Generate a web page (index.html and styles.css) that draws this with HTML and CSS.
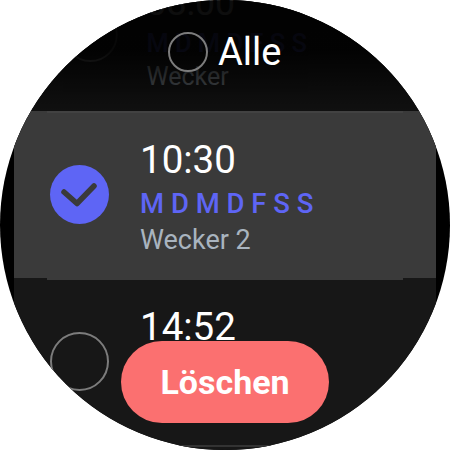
FILE: index.html
```html
<!DOCTYPE html>
<html lang="de">
<head>
<meta charset="utf-8">
<title>Wecker</title>
<link rel="stylesheet" href="styles.css">
</head>
<body>
<main class="watch">
  <div class="list">
    <div class="row row-first">
      <span class="radio"></span>
      <div class="info">
        <div class="time">08:00</div>
        <div class="days">M D M D F S S</div>
        <div class="label">Wecker</div>
      </div>
    </div>
    <div class="row row-selected">
      <span class="radio radio-on">
        <svg class="check" viewBox="0 0 59 59"><path d="M14 27 L27 38.500 L44 21"/></svg>
      </span>
      <div class="info">
        <div class="time">10:30</div>
        <div class="days">M D M D F S S</div>
        <div class="label">Wecker 2</div>
      </div>
    </div>
    <div class="row">
      <span class="radio"></span>
      <div class="info">
        <div class="time">14:52</div>
      </div>
    </div>
    <div class="row row-end"></div>
  </div>
  <div class="fade"></div>
  <header class="head">
    <span class="head-radio"></span>
    <span class="head-title">Alle</span>
  </header>
  <button class="delete">Löschen</button>
</main>
</body>
</html>
```
FILE: styles.css
```css
* { box-sizing: border-box; }
html, body { margin: 0; background: #fff; }
.watch {
  position: relative;
  width: 450px;
  height: 450px;
  border-radius: 50%;
  overflow: hidden;
  background: #000;
  font-family: Roboto, sans-serif;
}
.list {
  margin: -56px 14px 0;
  background: #171717;
}
.row {
  position: relative;
  display: flex;
  align-items: center;
  gap: 31px;
  height: 167px;
  padding-left: 36px;
}
.row::before {
  content: "";
  position: absolute;
  top: 0;
  left: 33px;
  right: 33px;
  height: 2px;
  background: #333;
}
.row-first::before { display: none; }
.row-first {
  transform: scale(.925);
  transform-origin: 50% 179px;
  opacity: .6;
}
.row-selected { background: #3a3a3a; }
.row-selected::before { background: #424242; }
.row-selected + .row::before { background: #3a3a3a; }
.row-end { height: 10px; }
.radio {
  flex: none;
  width: 59px;
  height: 59px;
  border-radius: 50%;
  border: 2px solid #7c7c7c;
}
.radio-on {
  border: 0;
  background: #5e65f5;
}
.check {
  display: block;
  width: 59px;
  height: 59px;
  fill: none;
  stroke: #3a3a3a;
  stroke-width: 5.500;
  stroke-linecap: round;
  stroke-linejoin: round;
}
.info {
  height: 120px;
  margin-top: 6px;
}
.time {
  font-size: 38.500px;
  line-height: 44px;
  color: #fff;
}
.days {
  font-size: 27.500px;
  line-height: 36px;
  font-weight: 500;
  color: #5e65f5;
  margin-top: 4px;
}
.label {
  font-size: 27px;
  line-height: 36px;
  color: #a9b4bf;
}
.fade {
  position: absolute;
  top: 0;
  left: 0;
  right: 0;
  height: 111px;
  background: linear-gradient(rgba(0,0,0,.92) 0, rgba(0,0,0,.9) 45%, rgba(0,0,0,.3) 100%);
}
.head {
  position: absolute;
  top: 28px;
  left: 168px;
  display: flex;
  align-items: center;
  gap: 10px;
}
.head-radio {
  width: 40px;
  height: 40px;
  border-radius: 50%;
  border: 2px solid #7c7c7c;
}
.head-title {
  font-size: 38px;
  line-height: 48px;
  color: #fff;
}
.delete {
  position: absolute;
  left: 121px;
  top: 341px;
  width: 208px;
  height: 82px;
  border: 0;
  border-radius: 41px;
  background: #fb7070;
  color: #fff;
  font-family: Roboto, sans-serif;
  font-size: 34px;
  font-weight: 700;
}
```
